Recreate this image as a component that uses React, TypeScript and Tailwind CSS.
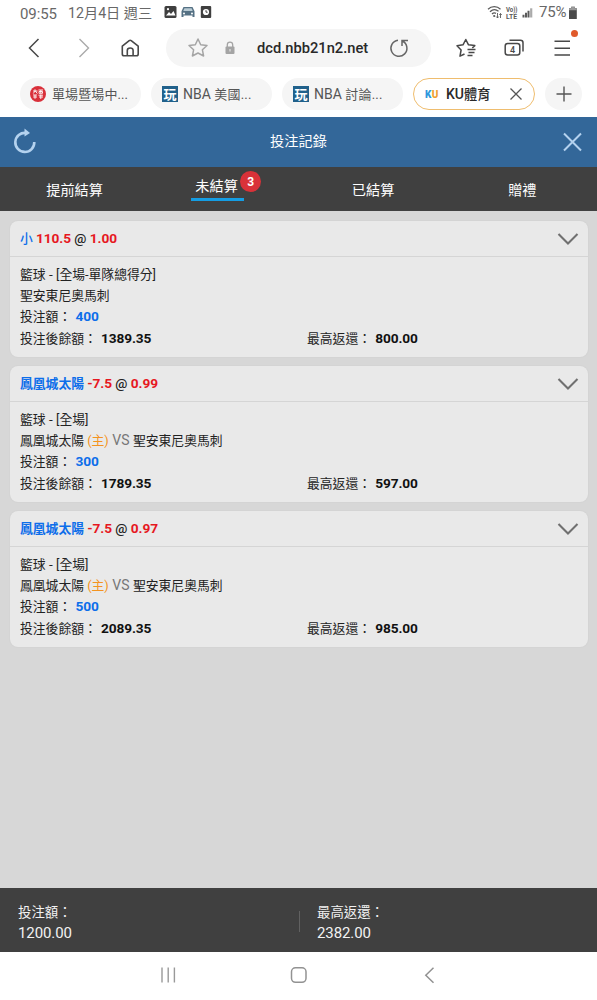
import React from "react";

type Bet = {
  pick: string;
  pickBold: boolean;
  line: string;
  odds: string;
  market: string;
  home: string;
  away?: string;
  stake: string;
  balance: string;
  payout: string;
};

const bets: Bet[] = [
  { pick: "小", pickBold: false, line: "110.5", odds: "1.00", market: "[全場-單隊總得分]", home: "聖安東尼奧馬刺", stake: "400", balance: "1389.35", payout: "800.00" },
  { pick: "鳳凰城太陽", pickBold: true, line: "-7.5", odds: "0.99", market: "[全場]", home: "鳳凰城太陽", away: "聖安東尼奧馬刺", stake: "300", balance: "1789.35", payout: "597.00" },
  { pick: "鳳凰城太陽", pickBold: true, line: "-7.5", odds: "0.97", market: "[全場]", home: "鳳凰城太陽", away: "聖安東尼奧馬刺", stake: "500", balance: "2089.35", payout: "985.00" },
];

function StatusBar() {
  return (
    <div className="flex h-[27px] items-center pl-5 text-[#686868]">
      <span className="w-12 pt-px text-[15px] tracking-[-0.1px]">09:55</span>
      <span className="w-[95px] pt-px text-[14.2px]">12月4日 週三</span>
      <svg width="32" height="14" viewBox="0 0 32 14" className="mt-[-3px]">
        <rect x="1.5" y="1" width="12" height="12" rx="1.5" fill="#3f3f3f" />
        <path d="M3 10.5 6 7l2 2 2.5-3 2 4.5z" fill="#fff" />
        <circle cx="5" cy="4.2" r="1.1" fill="#fff" />
        <path d="M20.5 2h9l2 4.2V12h-2v-1.5h-9V12h-2V6.2z" fill="#557184" />
        <path d="M21.4 3.2h7.2l1.1 2.9h-9.4z" fill="#b9cbd4" />
        <circle cx="21" cy="8.4" r="1" fill="#fff" />
        <circle cx="29" cy="8.4" r="1" fill="#fff" />
      </svg>
      <svg width="12" height="14" viewBox="0 0 12 14" className="mt-[-3px] ml-[5px]">
        <rect x="0.8" y="1" width="10.4" height="12" rx="1" fill="#3f3f3f" />
        <circle cx="6" cy="7" r="3.1" fill="#fff" />
        <path d="M6 5.2V7.2h1.6" stroke="#3f3f3f" fill="none" />
      </svg>
      <svg width="50" height="16" viewBox="0 0 50 16" className="mt-[-3px] ml-[275px]" fill="none" stroke="#5a5a5a">
        <path d="M1 5.2C4.5 1.8 10 1.8 13.5 5.2M3 7.7c2.7-2.5 6-2.5 8.5-.4M5 10c1.3-1.2 2.8-1.3 4-.6" strokeWidth="1.3" />
        <circle cx="7.2" cy="12" r="1.1" fill="#5a5a5a" stroke="none" />
        <path d="M10.5 9v5M9.2 12.5l1.3 1.5 1.3-1.5M13.5 14V9.5M12.3 11l1.2-1.5 1.2 1.5" strokeWidth="0.9" />
        <text x="19" y="7.5" fontSize="7" fontWeight="700" fill="#5a5a5a" stroke="none" textLength="11.5" lengthAdjust="spacingAndGlyphs">Vo))</text>
        <text x="19" y="14.5" fontSize="7" fontWeight="700" fill="#5a5a5a" stroke="none" textLength="11" lengthAdjust="spacingAndGlyphs">LTE</text>
        <path d="M36.5 13.5v-2.7M39 13.5V8.8M41.5 13.5V6.8" strokeWidth="2" />
        <path d="M44.2 13.5V4.3" strokeWidth="2.2" stroke="#aaa" />
      </svg>
      <span className="-mt-0.5 ml-0.5 w-[29px] text-[15px] tracking-[-0.2px] whitespace-nowrap">75%</span>
      <svg width="10" height="14" viewBox="0 0 10 14" className="-mt-0.5">
        <path d="M3.2.7h3.6v1.5h2v10.9H1V2.2h2.2z" fill="#4a4a4a" />
        <path d="M3.2.7h3.6v1.5h2v2H1v-2h2.2z" fill="#999" />
      </svg>
    </div>
  );
}

const starPath = "M12 3l2.7 5.7 6.3.8-4.6 4.3 1.2 6.2L12 17l-5.6 3 1.2-6.2L3 9.5l6.3-.8z";

function Toolbar() {
  return (
    <div className="flex h-[41px] items-center pl-[22px] pt-px">
      <svg width="24" height="24" fill="none" stroke="#484848" strokeWidth="1.5" className="shrink-0"><path d="M16.5 3 7.5 12l9 9" /></svg>
      <svg width="24" height="24" fill="none" stroke="#aaa" strokeWidth="1.4" className="ml-[26px] shrink-0"><path d="M7.5 3l9 9-9 9" /></svg>
      <svg width="24" height="24" fill="none" stroke="#484848" strokeWidth="1.6" strokeLinejoin="round" className="ml-[22px] shrink-0">
        <path d="M4.3 10.2 11.2 4.6q1-.8 2 0l7 5.6V18q0 1.8-1.8 1.8H6.1Q4.3 19.8 4.3 18z" />
        <path d="M9.3 19.5v-5q0-2.5 2.9-2.5t2.9 2.5v5" />
      </svg>
      <div className="ml-6 flex h-[38px] w-[265px] shrink-0 items-center rounded-full bg-[#f5f5f5] pl-5">
        <svg width="24" height="24" fill="none" stroke="#a5a5a5" strokeWidth="1.5" strokeLinejoin="round"><path d={starPath} /></svg>
        <svg width="12" height="16" viewBox="0 0 12 16" className="ml-3.5">
          <path d="M3.3 7V4.8a2.7 2.7 0 0 1 5.4 0V7" fill="none" stroke="#a4a4a4" strokeWidth="1.3" />
          <rect x="1.5" y="6.5" width="9" height="7.5" rx="1" fill="#a4a4a4" />
          <path d="M6 9v2.5" stroke="#eee" />
        </svg>
        <span className="ml-[21px] w-[130px] pt-px text-[14.7px] font-medium text-[#292929]">dcd.nbb21n2.net</span>
        <svg width="24" height="24" fill="none" stroke="#666" strokeWidth="1.5">
          <path d="M11 4.3A8 8 0 1 0 15.3 5M21 4.5h-6v5.5" />
        </svg>
      </div>
      <svg width="24" height="24" fill="none" stroke="#484848" strokeWidth="1.5" strokeLinejoin="round" className="ml-[23px] shrink-0">
        <path d="M10.5 18 6 20.2l1.1-6.2L3 9.8l6-1L11.8 3.5l2.7 5.3 6.3.8-2.5 2.4" />
        <path d="M13.5 13.5h8M14.5 16.5h6M13.5 19.5h5" strokeWidth="1.4" />
      </svg>
      <svg width="24" height="24" fill="none" stroke="#484848" strokeWidth="1.5" className="ml-6 shrink-0">
        <rect x="3.2" y="7.5" width="14.6" height="11.5" rx="2.5" />
        <path d="M7.5 4.3h11q2.5 0 2.5 2.5v8.7" />
        <text x="10.5" y="16.5" fontSize="9" fill="#484848" stroke="none" textAnchor="middle" fontWeight="500">4</text>
      </svg>
      <div className="relative ml-6 h-6 w-6 shrink-0">
        <svg width="24" height="24" stroke="#484848" strokeWidth="1.5"><path d="M4.5 5.2h15.5M4.5 12.2h15.5M4.5 19h15.5" /></svg>
        <div className="absolute top-[-6px] left-[21px] h-[7px] w-[7px] rounded-full bg-[#e05a2b]" />
      </div>
    </div>
  );
}

function PlayIcon() {
  return <span className="flex h-4 w-4 shrink-0 items-center justify-center bg-[#21618b] text-[13px] leading-none font-bold text-white">玩</span>;
}

function BrowserTabs() {
  return (
    <div className="flex h-[49px] items-start pt-[10px] pl-5 text-[13px] text-[#555]">
      <div className="flex h-8 w-[121px] items-center rounded-full bg-[#f5f5f5] pl-2.5">
        <svg width="16" height="16" viewBox="0 0 16 16">
          <circle cx="8" cy="8" r="8" fill="#d9303a" />
          <g fill="none" stroke="#fff" strokeWidth="0.9">
            <path d="M3 5h4.5M5 3.3v1.7L3.3 7.5M5.3 5l2 2.5M8.5 4h4.5M9 7.3V5.5h3.5v1.8zM10.8 4v3M3 9h4M5 9v3.8M3.2 11h3.8M8.5 9.2H13M9 11h4M10.8 8.5v4.5" />
          </g>
        </svg>
        <span className="ml-1.5 pt-px tracking-[0.1px] whitespace-nowrap">單場暨場中...</span>
      </div>
      {["美國...", "討論..."].map((title) => (
        <div key={title} className="ml-2.5 flex h-8 w-[121px] items-center rounded-full bg-[#f5f5f5] pl-[11px]">
          <PlayIcon />
          <span className="ml-[5px] pt-px whitespace-nowrap"><span className="text-[14px]">NBA </span><span className="tracking-[0.2px]">{title}</span></span>
        </div>
      ))}
      <div className="ml-2.5 flex h-8 w-[122px] items-center rounded-full border-[1.5px] border-[#efbd6e] bg-white pl-[11px]">
        <span className="w-[21px] text-[10px] font-black tracking-[0.3px]"><span className="text-[#3098dc]">K</span><span className="text-[#efa133]">U</span></span>
        <span className="w-[61px] pt-px text-[13.2px] font-medium whitespace-nowrap text-[#292929]"><span className="text-[14px]">KU</span>體育</span>
        <svg width="18" height="18" stroke="#555" strokeWidth="1.3"><path d="m3.5 3.5 11 11m0-11-11 11" /></svg>
      </div>
      <div className="ml-[10px] flex h-8 w-[37px] items-center justify-center rounded-full bg-[#f5f5f5]">
        <svg width="18" height="18" stroke="#555" strokeWidth="1.4"><path d="M9 1.5v15M1.5 9h15" /></svg>
      </div>
    </div>
  );
}

function Header() {
  return (
    <header className="flex h-[50px] items-center justify-between bg-[#336799] px-3 text-[14.2px] text-white">
      <svg width="26" height="28" viewBox="0 0 26 28" fill="none" stroke="#b4d2ef" strokeWidth="2.6" className="-mt-px">
        <path d="M14 5A9.5 9.5 0 1 0 22.3 14" />
        <path d="m12.5.5 5.5 4.5-5.5 3.5z" fill="#b4d2ef" stroke="none" />
      </svg>
      <span>投注記錄</span>
      <svg width="26" height="26" stroke="#b4d2ef" strokeWidth="2"><path d="m5 4.5 17 17m0-17-17 17" /></svg>
    </header>
  );
}

function SectionNav() {
  return (
    <nav className="grid h-11 grid-cols-4 bg-[#404040] text-[14.2px] text-white">
      <div className="flex items-center justify-center pt-1">提前結算</div>
      <div className="flex items-start pt-[9px] pl-[42px]">
        <div className="relative h-[25px] w-[53px] border-b-[3px] border-[#159de3] pl-1 whitespace-nowrap">
          未結算
          <span className="absolute -top-[5px] left-[49px] flex h-[21px] w-[21px] items-center justify-center rounded-full bg-[#d93239] text-[12px] font-bold">3</span>
        </div>
      </div>
      <div className="flex items-center justify-center pt-1">已結算</div>
      <div className="flex items-center justify-center pt-1">贈禮</div>
    </nav>
  );
}

function Amount({ value, blue = false }: { value: string; blue?: boolean }) {
  return (
    <b className={blue ? "ml-px text-[13.7px] leading-none tracking-[-0.1px] text-[#0d6eea]" : "ml-px text-[13.7px] leading-none tracking-[-0.1px] text-[#111]"}>{value}</b>
  );
}

function BetCard({ bet }: { bet: Bet }) {
  return (
    <section className="h-[136px] rounded-lg bg-[#e9e9e9] text-[12.8px] text-[#222] shadow-[0_0_2px_rgba(0,0,0,0.06)]">
      <div className="flex h-9 items-center justify-between border-b border-[#d5d5d5] pr-2 pl-2.5">
        <div className="whitespace-pre font-bold text-[#e6181f]">
          <span className={bet.pickBold ? "text-[#0d6eea]" : "font-medium text-[#0d6eea]"}>{bet.pick}</span>
          <span className="text-[13.7px] tracking-[-0.1px]"> {bet.line}</span>
          <span className="text-[13.5px] font-medium text-[#222]"> @ </span>
          <span className="text-[13.7px] tracking-[-0.1px]">{bet.odds}</span>
        </div>
        <svg width="24" height="16" fill="none" stroke="#707070" strokeWidth="2.1"><path d="m2.5 3 9.5 9.5L21.5 3" /></svg>
      </div>
      <div className="pt-[7px] pl-2.5 leading-[21.2px]">
        <div>籃球<span className="text-[13.5px] leading-none"> - </span>{bet.market}</div>
        <div>
          {bet.home}
          {bet.away && <><span className="text-[#f49320]"> (主)</span><span className="text-[14px] leading-none text-[#777]"> VS </span>{bet.away}</>}
        </div>
        <div>投注額： <Amount value={bet.stake} blue /></div>
        <div className="flex">
          <div className="w-[287px]">投注後餘額： <Amount value={bet.balance} /></div>
          <div>最高返還： <Amount value={bet.payout} /></div>
        </div>
      </div>
    </section>
  );
}

function Totals() {
  return (
    <footer className="flex h-16 items-center bg-[#404040] pl-[18px] text-[13.4px] leading-[21px] text-[#f2f2f2]">
      <div className="w-[281px] pt-1.5"><div>投注額：</div><div className="text-[15px] tracking-[-0.1px]">1200.00</div></div>
      <div className="mt-0.5 h-[21px] w-px bg-[#616161]" />
      <div className="pt-1.5 pl-[17px]"><div>最高返還：</div><div className="text-[15px] tracking-[-0.1px]">2382.00</div></div>
    </footer>
  );
}

function SystemNav() {
  return (
    <div className="flex h-12 items-center bg-white pb-0.5 pl-[156px]">
      <svg width="24" height="24" stroke="#999" strokeWidth="1.4"><path d="M6 4.5v15M12.2 4.5v15M18.4 4.5v15" /></svg>
      <svg width="24" height="24" fill="none" stroke="#929292" strokeWidth="1.5" className="ml-[107px]"><rect x="4.5" y="4.8" width="14.5" height="14.5" rx="4" /></svg>
      <svg width="24" height="24" fill="none" stroke="#929292" strokeWidth="1.5" className="ml-[106px]"><path d="m16.5 4.8-7.7 7.5 7.7 7.5" /></svg>
    </div>
  );
}

export default function App() {
  return (
    <div className="flex h-[1000px] w-[597px] flex-col overflow-hidden bg-white font-[Roboto,'Noto_Sans_CJK_TC',sans-serif]">
      <StatusBar />
      <Toolbar />
      <BrowserTabs />
      <Header />
      <SectionNav />
      <main className="flex flex-1 flex-col gap-[9px] bg-[#d7d7d7] pt-2.5 pr-[9px] pl-2.5">
        {bets.map((bet, i) => <BetCard key={i} bet={bet} />)}
      </main>
      <Totals />
      <SystemNav />
    </div>
  );
}
